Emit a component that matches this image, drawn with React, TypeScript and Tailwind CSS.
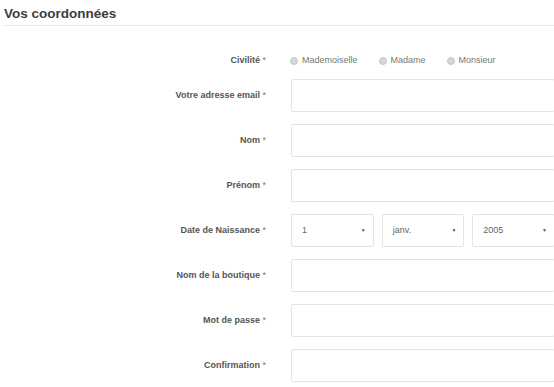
import React from 'react';

const labelCls =
  "w-[267px] shrink-0 text-right text-[9px] font-bold text-[#555] pr-[1px]";

const Field: React.FC<{ label: string; children?: React.ReactNode }> = ({ label, children }) => (
  <div className="flex items-center h-[33px] mb-[12px]">
    <div className={labelCls}>
      {label} <span className="font-normal text-[#777]">*</span>
    </div>
    <div className="ml-[24px] w-[264px] shrink-0 h-full">{children}</div>
  </div>
);

const TextBox: React.FC = () => (
  <input
    type="text"
    className="w-full h-full border border-[#e4e4e4] rounded-[2px] bg-white outline-none px-2 text-[9px]"
  />
);

const SelectBox: React.FC<{ value: string }> = ({ value }) => (
  <div className="flex-1 h-full border border-[#e4e4e4] rounded-[2px] bg-white flex items-center justify-between pl-[10px] pr-[7px]">
    <span className="text-[9px] text-[#666]">{value}</span>
    <span className="text-[5px] text-[#555]">▼</span>
  </div>
);

const Radio: React.FC<{ label: string }> = ({ label }) => (
  <label className="flex items-center mr-[21px]">
    <span className="w-[8px] h-[8px] rounded-full bg-[#d6d6d6] border border-[#c8c8c8] mr-[4px]" />
    <span className="text-[9px] text-[#777]">{label}</span>
  </label>
);

export default function App() {
  const rows = [
    "Votre adresse email",
    "Nom",
    "Prénom",
  ];
  return (
    <div
      className="w-[554px] h-[387px] overflow-hidden bg-white"
      style={{ fontFamily: '"Liberation Sans", Arial, sans-serif' }}
    >
      <div className="pl-[4px] pt-[7px]">
        <h2 className="text-[13.5px] font-bold text-[#3c3c3c] leading-[14px]">Vos coordonnées</h2>
      </div>
      <div className="mt-[4px] ml-[2px] border-t border-[#ececec]" />

      <div className="mt-[26px] flex items-center h-[18px] mb-[9px]">
        <div className={labelCls}>
          Civilité <span className="font-normal text-[#777]">*</span>
        </div>
        <div className="ml-[23px] flex items-center">
          <Radio label="Mademoiselle" />
          <Radio label="Madame" />
          <Radio label="Monsieur" />
        </div>
      </div>

      {rows.map((r) => (
        <Field key={r} label={r}>
          <TextBox />
        </Field>
      ))}

      <Field label="Date de Naissance">
        <div className="flex gap-[8px] h-full">
          <SelectBox value="1" />
          <SelectBox value="janv." />
          <SelectBox value="2005" />
        </div>
      </Field>

      <Field label="Nom de la boutique">
        <TextBox />
      </Field>
      <Field label="Mot de passe">
        <TextBox />
      </Field>
      <Field label="Confirmation">
        <TextBox />
      </Field>
    </div>
  );
}
